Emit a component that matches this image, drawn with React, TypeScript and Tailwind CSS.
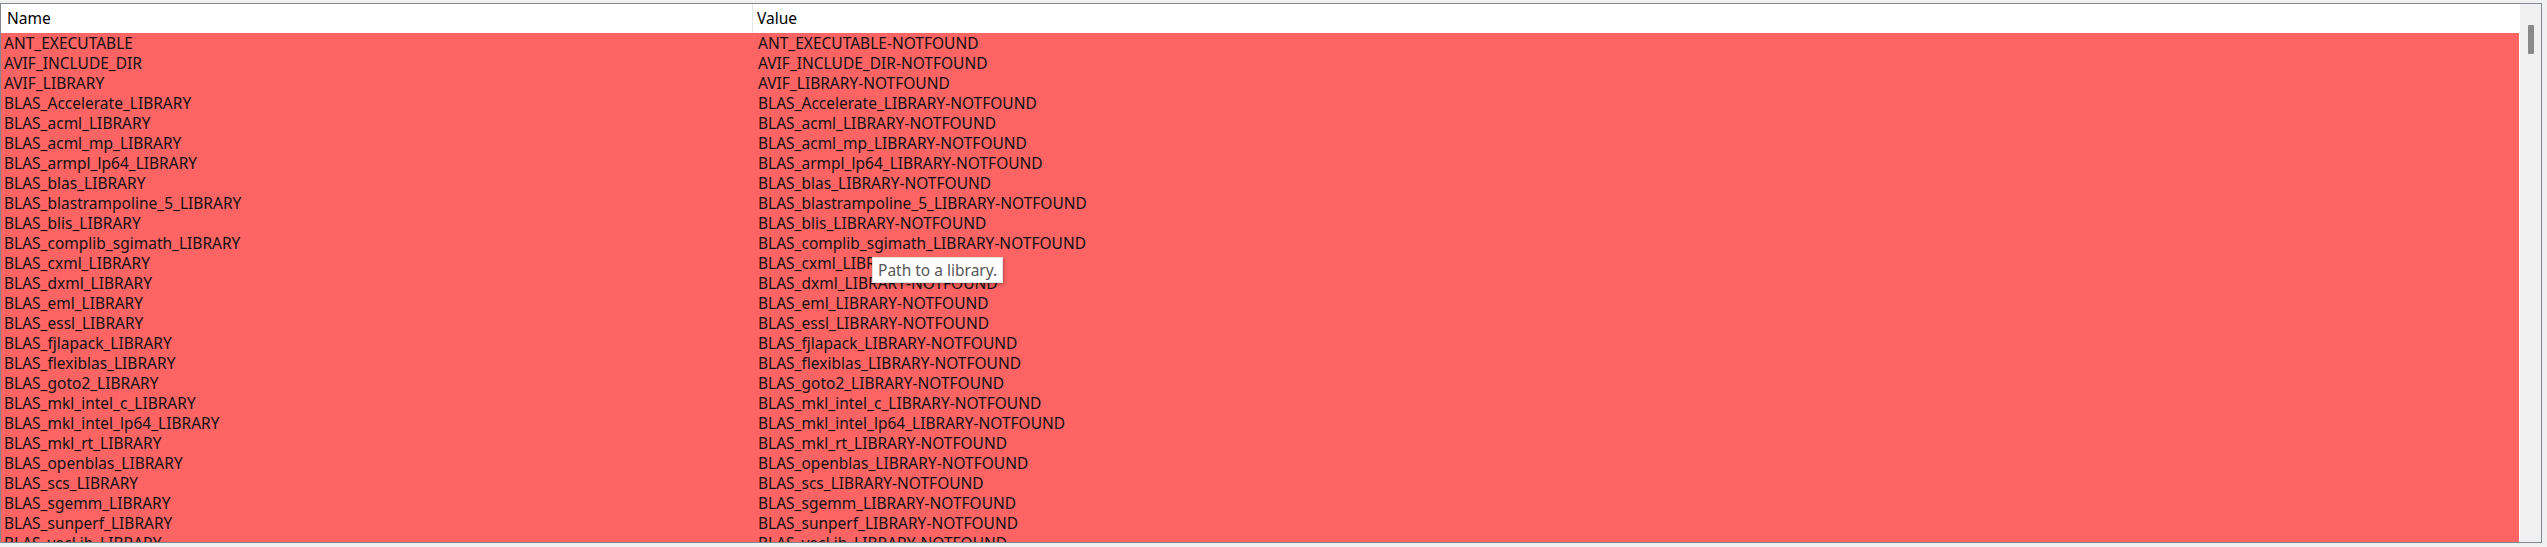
import React from "react";

const names = [
  "ANT_EXECUTABLE",
  "AVIF_INCLUDE_DIR",
  "AVIF_LIBRARY",
  "BLAS_Accelerate_LIBRARY",
  "BLAS_acml_LIBRARY",
  "BLAS_acml_mp_LIBRARY",
  "BLAS_armpl_lp64_LIBRARY",
  "BLAS_blas_LIBRARY",
  "BLAS_blastrampoline_5_LIBRARY",
  "BLAS_blis_LIBRARY",
  "BLAS_complib_sgimath_LIBRARY",
  "BLAS_cxml_LIBRARY",
  "BLAS_dxml_LIBRARY",
  "BLAS_eml_LIBRARY",
  "BLAS_essl_LIBRARY",
  "BLAS_fjlapack_LIBRARY",
  "BLAS_flexiblas_LIBRARY",
  "BLAS_goto2_LIBRARY",
  "BLAS_mkl_intel_c_LIBRARY",
  "BLAS_mkl_intel_lp64_LIBRARY",
  "BLAS_mkl_rt_LIBRARY",
  "BLAS_openblas_LIBRARY",
  "BLAS_scs_LIBRARY",
  "BLAS_sgemm_LIBRARY",
  "BLAS_sunperf_LIBRARY",
  "BLAS_vecLib_LIBRARY",
];

export default function App() {
  return (
    <div
      className="w-full h-[547px] bg-[#f0f0f0] pt-[3px] overflow-hidden"
      style={{ fontFamily: '"Noto Sans", "Open Sans", sans-serif' }}
    >
      <div className="relative w-[2542px] h-[540px] border border-[#828790] flex overflow-hidden bg-white">
        <div className="flex-1 flex flex-col min-w-0 border-r border-white">
          <div className="h-[29px] flex bg-white text-[15.5px] text-black leading-[29px] shrink-0">
            <div className="w-[752px] border-r border-[#e5e5e5] pl-[6px]">Name</div>
            <div className="flex-1 pl-[4px]">Value</div>
          </div>
          <div className="flex-1 bg-[#ff6464] overflow-hidden">
            {names.map((n) => (
              <div key={n} className="h-[20px] flex text-[15.5px] leading-[20px] text-[#111]">
                <div className="w-[752px] pl-[3px] whitespace-nowrap">{n}</div>
                <div className="flex-1 pl-[5px] whitespace-nowrap">{n}-NOTFOUND</div>
              </div>
            ))}
          </div>
        </div>
        <div className="w-[21px] bg-[#f0f0f0] shrink-0 pt-[21px] flex justify-center">
          <div className="w-[6px] h-[29px] bg-[#8a8a8a] rounded-[1px]" />
        </div>
        <div className="absolute left-[871px] top-[253px] h-[26px] px-[5px] bg-white border border-[#e0e0e0] shadow-[1px_2px_3px_rgba(0,0,0,0.25)] text-[15.5px] leading-[24px] text-[#575757] whitespace-nowrap">
          Path to a library.
        </div>
      </div>
    </div>
  );
}
